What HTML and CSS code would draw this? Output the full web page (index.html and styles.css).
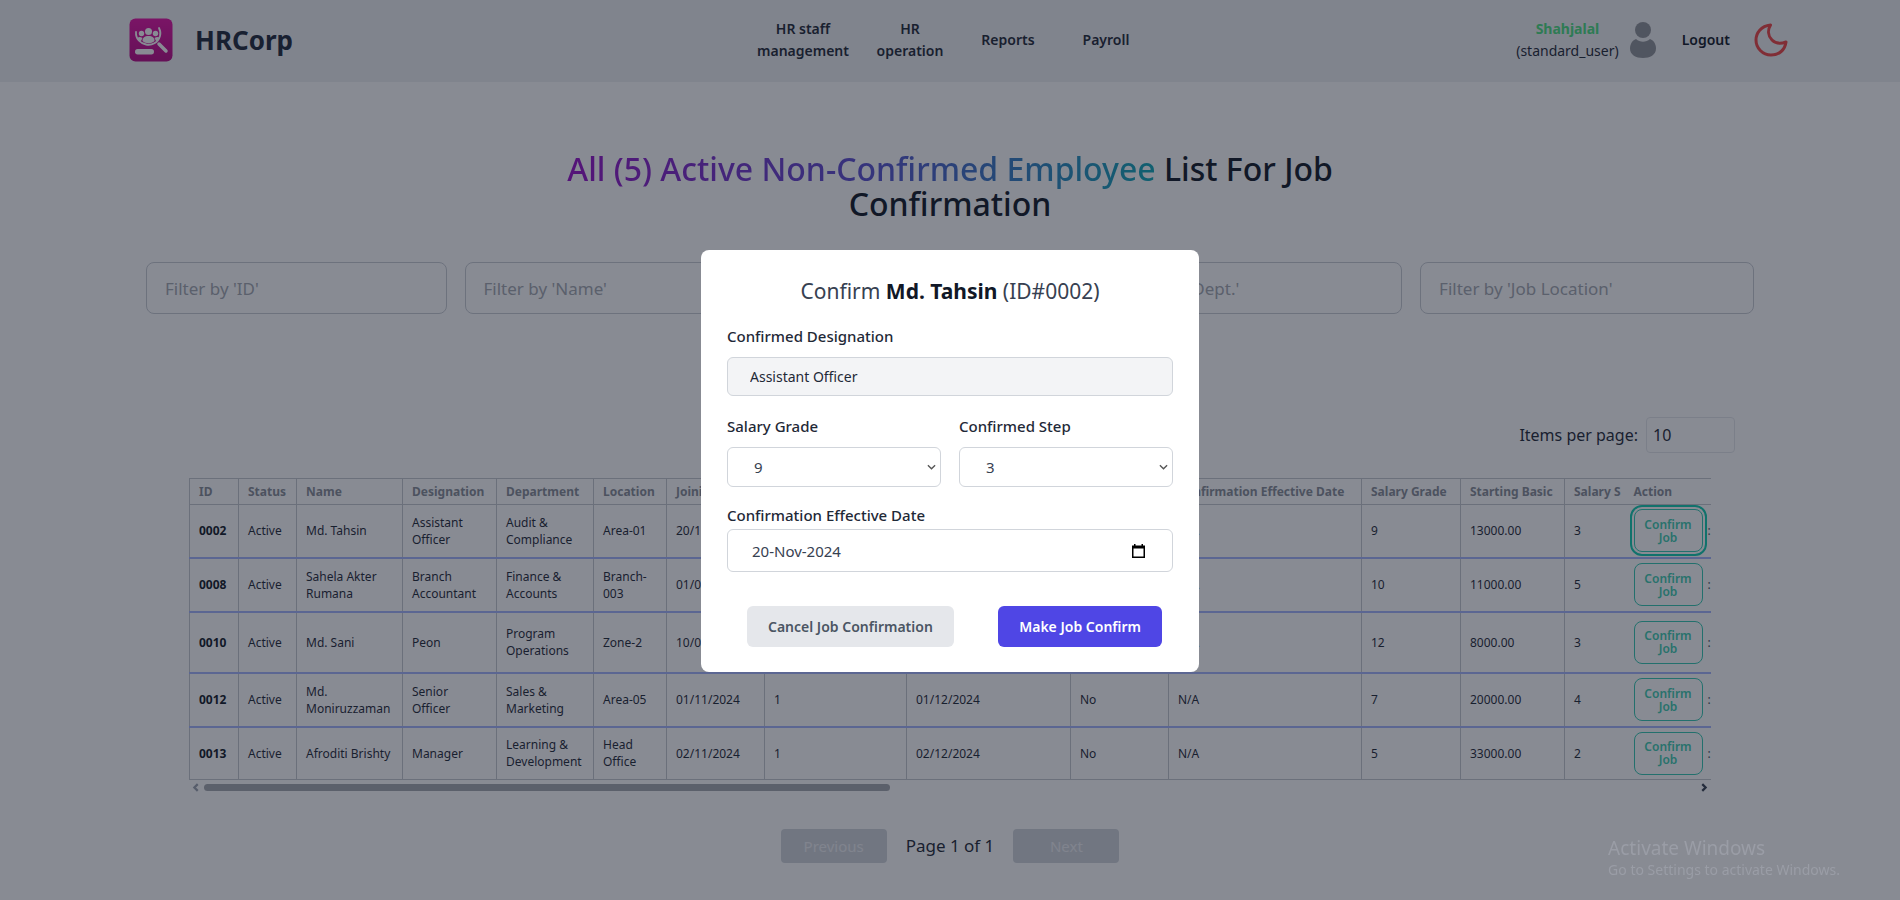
FILE: index.html
```html
<!DOCTYPE html>
<html lang="en">
<head>
<meta charset="utf-8">
<meta name="viewport" content="width=device-width, initial-scale=1">
<title>HRCorp</title>
<link rel="stylesheet" href="styles.css">
</head>
<body>
<header class="topbar">
  <a class="brand" href="#">
    <svg class="brand-logo" viewBox="0 0 44 44" aria-hidden="true">
      <defs><linearGradient id="logoFill" x1="0" y1="0" x2="0" y2="1"><stop offset="0" stop-color="#e311a4"/><stop offset="1" stop-color="#b80a86"/></linearGradient></defs>
      <rect x="0.5" y="0.5" width="43" height="43" rx="6" fill="url(#logoFill)"/>
      <g fill="#fff">
        <circle cx="19.500" cy="13.500" r="3.500"/><circle cx="12.500" cy="15.500" r="2.700"/><circle cx="26.500" cy="15.500" r="2.700"/>
        <path d="M13.500 23c0-3.500 2-5 6-5s6 1.500 6 5c-3 3-9 3-12 0z"/>
        <path d="M8.500 20c1-1.500 3-1.500 5 0l-1.500 3c-2 0-3-1-3.500-3zM30.500 20c-1-1.500-3-1.500-5 0l1.500 3c2 0 3-1 3.500-3z"/>
        <rect x="6" y="31" width="19" height="5.500" rx="2.700"/>
      </g>
      <g fill="none" stroke="#fff" stroke-linecap="round"><path stroke-width="1.800" d="M7 14c-1 14 20 18 24 4 1-3 0-6-1-8"/><path stroke-width="3.500" d="M30 26l7 7"/></g>
    </svg>
    <span>HRCorp</span>
  </a>
  <nav class="nav">
    <a href="#">HR staff<br>management</a>
    <a href="#">HR<br>operation</a>
    <a href="#">Reports</a>
    <a href="#">Payroll</a>
  </nav>
  <div class="account">
    <div class="user"><strong>Shahjalal</strong><span>(standard_user)</span></div>
    <svg class="avatar" viewBox="0 0 26 36" fill="#8f9298" aria-hidden="true"><circle cx="13" cy="8" r="8"/><path d="M6 17c4 3.500 10 3.500 14 0 4 1.500 6 5.500 6 9.500C26 33 20 36 13 36S0 33 0 26.500C0 22.500 2 18.500 6 17z"/></svg>
    <a class="logout" href="#">Logout</a>
    <button class="theme" aria-label="Toggle theme"><svg viewBox="0 0 34 34" fill="none" stroke="#ef4444" stroke-width="3" stroke-linejoin="round" aria-hidden="true"><path d="M16.500 2C7 3 2 10 2 17c0 8 6.500 15 15 15 8 0 14-5 15-13-5 2-10 2-14-2-4-4-4.500-10-1.500-15z"/></svg></button>
  </div>
</header>
<main class="content">
  <h1 class="title"><span>All (5) Active Non-Confirmed Employee</span> List For Job Confirmation</h1>
  <form class="filters">
    <input type="text" placeholder="Filter by 'ID'" aria-label="ID">
    <input type="text" placeholder="Filter by 'Name'" aria-label="Name">
    <input type="text" placeholder="Filter by 'Designation'" aria-label="Designation">
    <input type="text" placeholder="Filter by 'Dept.'" aria-label="Department">
    <input type="text" placeholder="Filter by 'Job Location'" aria-label="Job location">
  </form>
  <div class="per-page">
    <label for="perPage">Items per page:</label>
    <input id="perPage" type="text" value="10">
  </div>
  <section class="table-area">
    <div class="table-scroll">
      <table class="staff">
        <colgroup><col class="w-id"><col class="w-status"><col class="w-name"><col class="w-desig"><col class="w-dept"><col class="w-loc"><col class="w-join"><col class="w-prob"><col class="w-due"><col class="w-conf"><col class="w-eff"><col class="w-grade"><col class="w-basic"><col class="w-step"><col class="w-action"><col></colgroup>
        <thead>
          <tr><th>ID</th><th>Status</th><th>Name</th><th>Designation</th><th>Department</th><th>Location</th><th>Joining Date</th><th>Probation</th><th>Due Date</th><th>Confirmed</th><th>Confirmation Effective Date</th><th>Salary Grade</th><th>Starting Basic</th><th class="open">Salary S</th><th class="open">Action</th><th class="open more"></th></tr>
        </thead>
        <tbody>
          <tr><th scope="row">0002</th><td>Active</td><td>Md. Tahsin</td><td>Assistant Officer</td><td>Audit &amp; Compliance</td><td>Area-01</td><td>20/11/2024</td><td>1</td><td>20/12/2024</td><td>No</td><td>N/A</td><td>9</td><td>13000.00</td><td class="open">3</td><td class="open"><button class="confirm is-focused">Confirm Job</button></td><td class="open more">:</td></tr>
          <tr><th scope="row">0008</th><td>Active</td><td>Sahela Akter Rumana</td><td>Branch Accountant</td><td>Finance &amp; Accounts</td><td>Branch-003</td><td>01/09/2024</td><td>1</td><td>01/10/2024</td><td>No</td><td>N/A</td><td>10</td><td>11000.00</td><td class="open">5</td><td class="open"><button class="confirm">Confirm Job</button></td><td class="open more">:</td></tr>
          <tr class="tall"><th scope="row">0010</th><td>Active</td><td>Md. Sani</td><td>Peon</td><td>Program Operations</td><td>Zone-2</td><td>10/09/2024</td><td>1</td><td>10/10/2024</td><td>No</td><td>N/A</td><td>12</td><td>8000.00</td><td class="open">3</td><td class="open"><button class="confirm">Confirm Job</button></td><td class="open more">:</td></tr>
          <tr><th scope="row">0012</th><td>Active</td><td>Md. Moniruzzaman</td><td>Senior<br>Officer</td><td>Sales &amp; Marketing</td><td>Area-05</td><td>01/11/2024</td><td>1</td><td>01/12/2024</td><td>No</td><td>N/A</td><td>7</td><td>20000.00</td><td class="open">4</td><td class="open"><button class="confirm">Confirm Job</button></td><td class="open more">:</td></tr>
          <tr><th scope="row">0013</th><td>Active</td><td>Afroditi Brishty</td><td>Manager</td><td>Learning &amp; Development</td><td>Head Office</td><td>02/11/2024</td><td>1</td><td>02/12/2024</td><td>No</td><td>N/A</td><td>5</td><td>33000.00</td><td class="open">2</td><td class="open"><button class="confirm">Confirm Job</button></td><td class="open more">:</td></tr>
        </tbody>
      </table>
    </div>
    <div class="scrollbar" aria-hidden="true">
      <svg class="arrow arrow-off" viewBox="0 0 6 8"><path d="M5 1L2 4l3 3"/></svg>
      <div class="track"><div class="thumb"></div></div>
      <svg class="arrow" viewBox="0 0 6 8"><path d="M1 1l3 3-3 3"/></svg>
    </div>
  </section>
  <div class="pager">
    <button disabled>Previous</button>
    <span>Page 1 of 1</span>
    <button disabled>Next</button>
  </div>
</main>
<div class="backdrop">
  <form class="modal" role="dialog" aria-labelledby="dialogTitle">
    <h2 id="dialogTitle">Confirm <strong>Md. Tahsin</strong> (ID#0002)</h2>
    <div class="field">
      <label for="designation">Confirmed Designation</label>
      <input id="designation" class="control readonly" type="text" value="Assistant Officer" readonly>
    </div>
    <div class="pair">
      <div class="field">
        <label for="grade">Salary Grade</label>
        <select id="grade" class="control"><option>9</option></select>
      </div>
      <div class="field">
        <label for="step">Confirmed Step</label>
        <select id="step" class="control"><option>3</option></select>
      </div>
    </div>
    <div class="field date-field">
      <label for="date">Confirmation Effective Date</label>
      <input id="date" class="control date" type="text" value="20-Nov-2024">
    </div>
    <div class="actions">
      <button type="button" class="btn cancel">Cancel Job Confirmation</button>
      <button type="button" class="btn primary">Make Job Confirm</button>
    </div>
  </form>
</div>
<aside class="watermark"><p>Activate Windows</p><small>Go to Settings to activate Windows.</small></aside>
</body>
</html>
```

FILE: styles.css
```css
* { box-sizing: border-box; }
body { margin: 0; background: #fff; color: #1f2937; font-family: "Noto Sans", "Open Sans", sans-serif; font-size: 15px; line-height: 22px; overflow: hidden; }
a { color: inherit; text-decoration: none; }
button, input, select { font: inherit; color: inherit; }

.topbar { display: grid; grid-template-columns: 1fr auto 1fr; align-items: center; height: 82px; padding: 0 112px 3px; background: #eff0f2; }
.brand { display: flex; align-items: center; gap: 22px; margin-left: 17px; font-size: 26px; font-weight: 700; line-height: 32px; color: #1e293b; }
.brand-logo { width: 44px; height: 44px; }
.nav { display: flex; align-items: center; font-size: 14px; font-weight: 600; text-align: center; }
.nav a { min-width: 98px; padding: 0 12px; }
.account { display: flex; align-items: center; justify-content: flex-end; }
.user { display: flex; flex-direction: column; text-align: center; font-size: 14px; }
.user strong { color: #4ade80; }
.avatar { width: 26px; height: 36px; margin: 0 26px 0 11px; }
.logout { font-size: 14px; font-weight: 600; color: #111827; }
.theme { margin-left: 24px; padding: 0; border: 0; background: none; line-height: 0; }
.theme svg { width: 34px; height: 34px; }

.content { padding-top: 69px; }
.title { max-width: 800px; margin: 0 auto; font-size: 32px; font-weight: 500; line-height: 35px; text-align: center; color: #111827; }
.title span { color: transparent; background: linear-gradient(90deg, #9810c8, #5b4fd0 50%, #10a8b8); background-clip: text; -webkit-background-clip: text; }
.filters { display: grid; grid-template-columns: 9fr 9fr 9fr 9fr 10fr; gap: 18px; margin: 41px 146px 0; }
.filters input { width: 100%; min-width: 0; height: 52px; padding: 0 18px; border: 1px solid #c8ccd3; border-radius: 8px; background: transparent; font-size: 17px; }
.filters input::placeholder { color: #a4a8b0; opacity: 1; }
.per-page { display: flex; align-items: center; justify-content: flex-end; gap: 8px; margin: 103px 165px 0; font-size: 16px; }
.per-page input { width: 89px; height: 36px; padding: 0 6px; border: 1px solid #e5e7eb; border-radius: 4px; background: transparent; }

.table-area { margin: 25px 189px 0; }
.table-scroll { overflow: hidden; }
.staff { width: 100%; table-layout: fixed; border-collapse: collapse; font-size: 12px; line-height: 17px; }
.w-id { width: 49px; } .w-status { width: 58px; } .w-name { width: 106px; } .w-desig { width: 94px; }
.w-dept { width: 97px; } .w-loc { width: 73px; } .w-join { width: 98px; } .w-prob { width: 142px; }
.w-due { width: 164px; } .w-conf { width: 98px; } .w-eff { width: 193px; } .w-grade { width: 99px; }
.w-basic { width: 104px; } .w-step { width: 60px; } .w-action { width: 83px; }
.staff th, .staff td { padding: 0 0 0 9px; border: 1px solid #c4c8cf; text-align: left; vertical-align: middle; }
.staff .open { border-left-width: 0; border-right-width: 0; }
.staff thead th { height: 26px; color: #878c96; font-weight: 700; white-space: nowrap; }
.staff tbody tr { height: 54px; border-bottom: 2px solid #a5b4fc; }
.staff tbody tr:first-child { height: 53px; }
.staff tbody tr + tr th, .staff tbody tr + tr td { border-top: 2px solid #a5b4fc; }
.staff tbody tr:last-child { height: 53px; border-bottom: 1px solid #c4c8cf; }
.staff tbody .tall { height: 61px; }
.staff tbody th { color: #111827; font-weight: 700; }
.staff .more { padding: 0; color: #4b5563; }
.confirm { display: block; width: 69px; height: 43px; padding: 0 6px; border: 1px solid #35c9b2; border-radius: 8px; background: transparent; color: #40ccb0; font-weight: 600; line-height: 13px; }
.is-focused { outline: 2px solid #10cdb0; outline-offset: 2px; }

.scrollbar { display: flex; align-items: center; justify-content: space-between; gap: 5px; height: 7px; margin-top: 4px; padding: 0 3px; }
.arrow { width: 7px; height: 9px; fill: none; stroke: #374151; stroke-width: 2; }
.arrow-off { stroke: #9ca3af; }
.track { flex: 1; }
.thumb { width: 46%; height: 7px; border-radius: 4px; background: #a5a8ae; }

.pager { display: flex; justify-content: center; align-items: center; gap: 19px; margin-top: 38px; font-size: 17px; }
.pager button { width: 106px; height: 34px; border: 0; border-radius: 4px; background: #d1d5db; color: #eff0f4; font-size: 15px; }

.backdrop { position: fixed; inset: 0; display: flex; align-items: center; justify-content: center; padding-top: 22px; background: rgba(17, 24, 39, 0.5); }
.modal { width: 498px; padding: 25px 26px 25px 26px; border-radius: 8px; background: #fff; }
.modal h2 { margin: 0 0 18px; font-size: 21px; font-weight: 400; line-height: 32px; text-align: center; color: #374151; }
.modal h2 strong { color: #111827; }
.field { display: flex; flex-direction: column; gap: 10px; margin-bottom: 19px; }
.field label { font-size: 15px; font-weight: 500; color: #1f2937; }
.pair { display: grid; grid-template-columns: 1fr 1fr; gap: 18px; }
.pair .field { margin-bottom: 17px; }
.control { width: 100%; height: 40px; padding: 0 22px; border: 1px solid #d1d5db; border-radius: 6px; background-color: #fff; color: #374151; font-size: 15px; }
select.control { appearance: none; padding: 0 26px; background-image: url("data:image/svg+xml,%3Csvg xmlns='http://www.w3.org/2000/svg' viewBox='0 0 10 6' fill='none' stroke='%23555' stroke-width='1.500'%3E%3Cpath d='M1 1l4 4 4-4'/%3E%3C/svg%3E"); background-repeat: no-repeat; background-position: right 4px center; background-size: 9px 6px; }
.readonly { height: 39px; background-color: #f3f4f6; color: #1f2937; font-size: 14px; }
.date-field { gap: 3px; margin-bottom: 34px; }
.date { height: 43px; padding: 0 24px; background-image: url("data:image/svg+xml,%3Csvg xmlns='http://www.w3.org/2000/svg' viewBox='0 0 13 14'%3E%3Cpath fill='%23000' fill-rule='evenodd' d='M2 0h1.500v1.500h6V0H11v1.500h2V14H0V1.500h2zM1.500 4.500v8h10v-8z'/%3E%3C/svg%3E"); background-repeat: no-repeat; background-position: right 27px center; background-size: 13px 14px; }
.actions { display: flex; justify-content: space-between; padding: 0 11px 0 20px; }
.btn { height: 41px; padding: 0 21px; border: 0; border-radius: 6px; font-size: 14px; font-weight: 600; }
.cancel { background: #e5e7eb; color: #4b5563; }
.primary { background: #4f46e5; color: #fff; }
.watermark { position: fixed; right: 60px; bottom: 20px; color: #9a9da6; }
.watermark p { margin: 0; font-size: 19px; line-height: 24px; }
.watermark small { display: block; font-size: 14px; line-height: 20px; }
```
